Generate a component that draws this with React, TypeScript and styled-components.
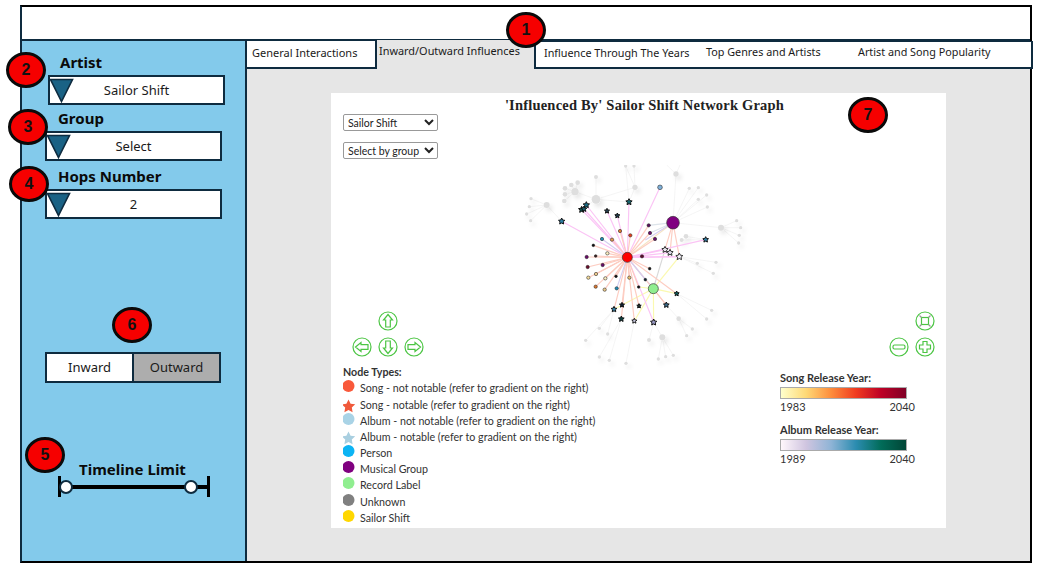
import React from "react";
import styled, { createGlobalStyle } from "styled-components";

const GlobalStyle = createGlobalStyle`
  html, body {
    margin: 0;
    padding: 0;
    background: #fff;
    font-family: "Noto Sans", "Liberation Sans", sans-serif;
  }
`;

const DARK = "#0e2b3f";

const Frame = styled.div`
  position: relative;
  box-sizing: border-box;
  width: 1012px;
  height: 558px;
  margin: 5px 0 0 20px;
  border: 2px solid #000;
  border-left-color: ${DARK};
  display: flex;
  flex-direction: column;
`;

const Header = styled.div`
  height: 32px;
  flex: none;
  background: #fff;
`;

const Main = styled.div`
  flex: 1;
  display: flex;
  min-height: 0;
  border-top: 2px solid ${DARK};
`;

const Sidebar = styled.div`
  box-sizing: border-box;
  width: 225px;
  flex: none;
  background: #83caeb;
  border-right: 2px solid ${DARK};
  padding-top: 11px;
  display: flex;
  flex-direction: column;
`;

const FieldLabel = styled.div<{ $left: number }>`
  margin-left: ${p => p.$left}px;
  font-size: 15px;
  line-height: 20px;
  font-weight: 700;
  color: #0a0a0a;
`;

const FieldBox = styled.div<{ $left: number; $gap: number }>`
  position: relative;
  box-sizing: border-box;
  width: 177px;
  height: 30px;
  margin: 3px 0 ${p => p.$gap}px ${p => p.$left}px;
  border: 2px solid ${DARK};
  background: #fff;
  font-size: 13px;
  line-height: 26px;
  text-align: center;
  color: #1a1a1a;
`;

const Caret = styled.svg`
  position: absolute;
  left: -1px;
  top: 1px;
  width: 25px;
  height: 25px;
`;

const Toggle = styled.div`
  box-sizing: border-box;
  display: flex;
  width: 176px;
  height: 31px;
  margin: 133px 0 0 23px;
  border: 2px solid ${DARK};
`;

const ToggleSide = styled.div<{ $off?: boolean }>`
  flex: 1;
  font-size: 13px;
  line-height: 27px;
  text-align: center;
  color: #1a1a1a;
  background: ${p => (p.$off ? "#adadad" : "#fff")};
  border-left: ${p => (p.$off ? `2px solid ${DARK}` : "none")};
`;

const TimelineTitle = styled.div`
  margin: 76px 0 0 22px;
  width: 177px;
  text-align: center;
  font-size: 15px;
  line-height: 20px;
  font-weight: 700;
  color: #0a0a0a;
`;

const Slider = styled.div`
  position: relative;
  box-sizing: border-box;
  width: 152px;
  height: 21px;
  margin: -3px 0 0 36px;
  border-left: 3px solid #000;
  border-right: 3px solid #000;
  display: flex;
  align-items: center;
`;

const SliderLine = styled.div`
  width: 100%;
  height: 4px;
  background: #000;
`;

const Knob = styled.div<{ $left: number }>`
  position: absolute;
  left: ${p => p.$left}px;
  top: 4px;
  box-sizing: border-box;
  width: 14px;
  height: 14px;
  border-radius: 50%;
  border: 2px solid ${DARK};
  background: #fff;
`;

const Content = styled.div`
  flex: 1;
  min-width: 0;
  background: #e6e6e6;
  display: flex;
  flex-direction: column;
`;

const TabRow = styled.div`
  display: flex;
  height: 28px;
  margin-right: -3px;
  flex: none;
`;

const Tab = styled.div<{ $width: number; $active?: boolean; $pad: number }>`
  box-sizing: border-box;
  width: ${p => p.$width}px;
  padding: ${p => (p.$active ? "3px" : "4px")} 0 0 ${p => p.$pad}px;
  font-size: ${p => (p.$active ? "10.9px" : "11px")};
  line-height: 16px;
  color: #1a1a1a;
  white-space: nowrap;
  background: ${p => (p.$active ? "#e6e6e6" : "#fff")};
  border-bottom: ${p => (p.$active ? "none" : `2px solid ${DARK}`)};
  border-right: ${p => (p.$active ? "none" : `2px solid ${DARK}`)};
  margin-top: ${p => (p.$active ? "-1px" : "0")};
`;

const TabRest = styled.div`
  flex: 1;
  display: flex;
  background: #fff;
  border: 2px solid ${DARK};
  border-top-width: 1px;
  font-size: 10.8px;
  line-height: 16px;
  color: #1a1a1a;
  padding: 3px 0 0 8px;
  white-space: nowrap;
`;

const TabRestItem = styled.span<{ $width: number; $up?: boolean }>`
  width: ${p => p.$width}px;
  margin-top: ${p => (p.$up ? "-1px" : "0")};
`;

const Plot = styled.div`
  position: relative;
  box-sizing: border-box;
  width: 615px;
  height: 435px;
  margin: 24px 0 0 84px;
  padding: 3px 12px 0;
  background: #fff;
  font-family: Lato, "Noto Sans", sans-serif;
  display: flex;
  flex-direction: column;
`;

const PlotTitle = styled.div`
  text-align: center;
  font-family: "Liberation Serif", serif;
  font-weight: 700;
  font-size: 14.5px;
  letter-spacing: 0.2px;
  line-height: 18px;
  color: #222;
  padding-left: 12px;
`;

const PlotSelect = styled.select`
  display: block;
  width: 95px;
  height: 17px;
  margin-bottom: 11px;
  padding: 0;
  font-family: Lato, sans-serif;
  font-size: 10.5px;
  background: #fff;
  color: #222;
  border: 1px solid #999;
  border-radius: 2px;
`;

const Selects = styled.div`
  position: relative;
  z-index: 1;
`;

const GraphSvg = styled.svg`
  position: absolute;
  left: 179px;
  top: 72px;
  width: 250px;
  height: 205px;
  filter: blur(0.5px);
`;

const NavLeft = styled.div`
  position: absolute;
  left: 21px;
  top: 218px;
  display: grid;
  grid-template-columns: repeat(3, 20px);
  gap: 6px;
`;

const NavRight = styled.div`
  position: absolute;
  left: 558px;
  top: 218px;
  display: grid;
  grid-template-columns: repeat(2, 20px);
  gap: 6px;
`;

const NavIcon = styled.svg<{ $col: number; $row: number }>`
  width: 20px;
  height: 20px;
  grid-column: ${p => p.$col};
  grid-row: ${p => p.$row};
`;

const Bottom = styled.div`
  margin-top: auto;
  display: flex;
  justify-content: space-between;
  align-items: flex-start;
  padding-bottom: 2px;
`;

const Legend = styled.div`
  font-size: 10.7px;
  color: #333;
`;

const LegendTitle = styled.div`
  font-weight: 700;
  line-height: 16px;
`;

const LegendRow = styled.div`
  display: flex;
  align-items: flex-start;
  height: 16.2px;
  line-height: 16px;
`;

const LegendMark = styled.svg`
  width: 17px;
  height: 16px;
  flex: none;
`;

const Scale = styled.div`
  width: 135px;
  margin: 0 19px 0 0;
  padding-top: 7px;
  font-size: 11px;
  color: #333;
`;

const ScaleTitle = styled.div`
  font-weight: 700;
  line-height: 14px;
  font-size: 11px;
`;

const ScaleBar = styled.div<{ $colors: string }>`
  box-sizing: border-box;
  width: 127px;
  height: 12px;
  margin-top: 2px;
  border: 1px solid #aaa;
  background: linear-gradient(to right, ${p => p.$colors});
`;

const ScaleEnds = styled.div`
  display: flex;
  justify-content: space-between;
  line-height: 15px;
  margin-bottom: 9px;
`;

const Badge = styled.div<{ $x: number; $y: number }>`
  position: absolute;
  left: ${p => p.$x - 20 - 22}px;
  top: ${p => p.$y - 18 - 7}px;
  box-sizing: border-box;
  width: 40px;
  height: 36px;
  border-radius: 50%;
  border: 3px solid #0a0a0a;
  background: #f60000;
  font-family: "Liberation Sans", sans-serif;
  font-size: 16px;
  font-weight: 700;
  line-height: 30px;
  text-align: center;
  color: #111;
  z-index: 2;
`;

// graph drawn from the reference, units are 1/3 px
const starPoints = (x: number, y: number, r: number) => {
  const pts: string[] = [];
  for (let i = 0; i < 10; i++) {
    const a = (Math.PI / 5) * i - Math.PI / 2;
    const rad = i % 2 ? r * 0.5 : r;
    pts.push(`${(x + rad * Math.cos(a)).toFixed(1)},${(y + rad * Math.sin(a)).toFixed(1)}`);
  }
  return pts.join(" ");
};

const CENTER = [352, 277];
const PURPLE = [489, 173];
const GREEN = [430, 371];

const PINK = "#fbc4f5";
const SALMON = "#fdcdc2";
const LAV = "#d5cef0";
const YEL = "#fbf9b0";

const faded: number[][] = [
  [258, 103, 13], [195, 80, 11], [110, 120, 9], [165, 70, 7], [184, 60, 7], [203, 53, 7], [165, 88, 7],
  [163, 108, 7], [258, 36, 6], [63, 101, 5], [58, 125, 5], [50, 147, 5], [62, 167, 5], [375, 67, 8],
  [347, 3, 5], [372, 3, 5], [498, 27, 8], [538, 70, 5], [565, 68, 5], [590, 90, 5], [565, 103, 5],
  [592, 126, 5], [633, 188, 9], [680, 167, 5], [692, 188, 5], [688, 211, 5], [686, 234, 5], [528, 214, 7],
  [515, 225, 6], [562, 295, 5], [618, 292, 5], [610, 325, 5], [605, 436, 5], [590, 462, 5], [506, 461, 7],
  [547, 492, 5], [530, 512, 5], [457, 517, 9], [417, 525, 6], [490, 571, 5], [467, 575, 5], [445, 582, 5],
  [268, 490, 5], [293, 507, 5], [227, 526, 5], [268, 576, 5], [298, 586, 5], [348, 595, 5],
];

const fadedEdges: number[][] = [
  [258, 103, 195, 80], [258, 103, 215, 134], [258, 103, 357, 111], [258, 103, 258, 36], [195, 80, 165, 70],
  [195, 80, 184, 60], [195, 80, 203, 53], [195, 80, 165, 88], [195, 80, 163, 108], [110, 120, 155, 169],
  [110, 120, 63, 101], [110, 120, 58, 125], [110, 120, 50, 147], [110, 120, 62, 167], [375, 67, 357, 111],
  [375, 67, 347, 3], [375, 67, 372, 3], [375, 67, 258, 103], [489, 173, 498, 27], [489, 173, 538, 70],
  [489, 173, 565, 68], [489, 173, 590, 90], [489, 173, 565, 103], [489, 173, 592, 126], [489, 173, 633, 188],
  [633, 188, 680, 167], [633, 188, 692, 188], [633, 188, 688, 211], [633, 188, 686, 234], [587, 224, 528, 214],
  [587, 224, 515, 225], [508, 275, 562, 295], [508, 275, 618, 292], [508, 275, 610, 325], [500, 386, 605, 436],
  [500, 386, 590, 462], [469, 420, 506, 461], [506, 461, 547, 492], [506, 461, 530, 512], [431, 472, 457, 517],
  [431, 472, 417, 525], [457, 517, 490, 571], [457, 517, 467, 575], [457, 517, 445, 582], [312, 433, 268, 490],
  [312, 433, 293, 507], [312, 433, 227, 526], [334, 462, 268, 576], [334, 462, 298, 586], [373, 468, 348, 595],
  [498, 27, 470, 0], [498, 27, 510, 0], [357, 111, 347, 3],
];

const stars: [number, number, number, string, string][] = [
  [155, 169, 10, "#2f7fa6", PINK], [215, 134, 10, "#0c4f4f", PINK], [222, 132, 9, "#1b5a6a", PINK],
  [229, 120, 10, "#1a6c86", PINK], [291, 138, 8, "#26404f", PINK], [322, 152, 8, "#1f3b4a", PINK],
  [357, 111, 10, "#15656e", PINK], [587, 224, 9, "#2f7fa6", PINK], [465, 254, 10, "#e8e6ef", PINK],
  [480, 263, 10, "#dcd8e8", PINK], [508, 275, 11, "#f1eef6", PINK], [500, 386, 8, "#0d5a5a", SALMON],
  [469, 420, 9, "#3a6a8a", SALMON], [431, 472, 10, "#9a9ac4", PINK], [373, 468, 8, "#c8c8de", SALMON],
  [334, 462, 9, "#0c4040", SALMON], [387, 423, 7, "#223333", SALMON], [312, 433, 9, "#2f7fa6", SALMON],
  [336, 420, 8, "#112233", SALMON],
];

const dots: [number, number, number, string, string][] = [
  [450, 67, 7, "#7fb0d8", PINK], [276, 222, 5, "#1f8ab4", LAV], [306, 224, 5, "#e39a4d", SALMON],
  [330, 198, 5, "#d9772f", SALMON], [361, 211, 5, "#e3401f", SALMON], [416, 181, 5, "#5b0f5b", SALMON],
  [420, 204, 5, "#6a0a6a", SALMON], [435, 222, 5, "#6a0a6a", SALMON], [396, 274, 5, "#5e0c2c", PINK],
  [250, 241, 4, "#111", SALMON], [292, 265, 5, "#fbeec0", SALMON], [257, 273, 4, "#3a2020", SALMON],
  [230, 276, 5, "#6a0a6a", SALMON], [233, 306, 5, "#6a0c2c", SALMON], [278, 300, 5, "#6a0a6a", SALMON],
  [258, 327, 5, "#eac88a", SALMON], [235, 338, 5, "#f5dc9c", SALMON], [286, 340, 5, "#fbeec0", SALMON],
  [318, 334, 4, "#111", SALMON], [358, 338, 5, "#e8c070", SALMON], [406, 344, 4, "#123", LAV],
  [419, 311, 4, "#111", SALMON], [257, 365, 5, "#d9772f", SALMON], [284, 374, 5, "#eac88a", SALMON],
  [320, 370, 5, "#1f8ab4", LAV], [386, 366, 4, "#111", SALMON],
];

const sideEdges: [number[], number[], string][] = [
  [PURPLE, [352, 277], "#f6e4c4"], [PURPLE, [465, 254], SALMON], [PURPLE, [480, 263], SALMON],
  [PURPLE, [508, 275], SALMON], [PURPLE, [406, 225], LAV], [PURPLE, [416, 181], "#dde4ea"], [PURPLE, [420, 204], "#dde4ea"],
  [GREEN, [465, 254], "#d8d8d8"], [GREEN, [508, 275], YEL], [GREEN, [312, 433], YEL], [GREEN, [373, 468], YEL],
  [GREEN, [386, 366], YEL], [GREEN, [500, 386], YEL], [GREEN, [431, 472], YEL], [GREEN, [469, 420], SALMON],
  [[352, 277], [508, 275], PINK], [[352, 277], GREEN, LAV],
];

const isLight = (c: string) => /^#[def]/.test(c);

const NetworkGraph = () => (
  <GraphSvg viewBox="0 0 750 615">
    <defs>
      <filter id="soft" x="-30%" y="-30%" width="160%" height="160%">
        <feDropShadow dx="8" dy="10" stdDeviation="7" floodColor="#000" floodOpacity="0.1" />
      </filter>
    </defs>
    <g stroke="#f0f0f0" strokeWidth="2">
      {fadedEdges.map((e, i) => (
        <line key={i} x1={e[0]} y1={e[1]} x2={e[2]} y2={e[3]} />
      ))}
    </g>
    <g fill="#dedede" filter="url(#soft)">
      {faded.map((n, i) => (
        <circle key={i} cx={n[0]} cy={n[1]} r={n[2]} />
      ))}
    </g>
    <g strokeWidth="3.5">
      {sideEdges.map((e, i) => (
        <line key={i} x1={e[0][0]} y1={e[0][1]} x2={e[1][0]} y2={e[1][1]} stroke={e[2]} />
      ))}
      {[...stars, ...dots].map((n, i) => (
        <line key={i} x1={CENTER[0]} y1={CENTER[1]} x2={n[0]} y2={n[1]} stroke={n[4]} />
      ))}
    </g>
    <g stroke="#222" strokeWidth="1.6">
      {dots.map((n, i) => (
        <circle key={i} cx={n[0]} cy={n[1]} r={n[2]} fill={n[3]} />
      ))}
      {stars.map((n, i) => (
        <polygon key={i} points={starPoints(n[0], n[1], n[2])} fill={n[3]} stroke={isLight(n[3]) ? "#333" : "#111"} strokeWidth="3" />
      ))}
    </g>
    <g stroke="#333" strokeWidth="2">
      <circle cx={PURPLE[0]} cy={PURPLE[1]} r="19" fill="#800080" />
      <circle cx={GREEN[0]} cy={GREEN[1]} r="15" fill="#90ee90" />
      <circle cx={CENTER[0]} cy={CENTER[1]} r="15" fill="#ff0000" />
    </g>
  </GraphSvg>
);

const ARROW_UP = "M10 3.5 L14.5 9 L12.3 9 L12.3 16 L7.7 16 L7.7 9 L5.5 9 Z";
const glyphs: Record<string, React.ReactNode> = {
  up: <path d={ARROW_UP} />,
  down: <path d={ARROW_UP} transform="rotate(180 10 10)" />,
  left: <path d={ARROW_UP} transform="rotate(-90 10 10)" />,
  right: <path d={ARROW_UP} transform="rotate(90 10 10)" />,
  minus: <rect x="4" y="8" width="12" height="4" rx="1.5" />,
  plus: <path d="M8 4.5 H12 V8 H15.5 V12 H12 V15.5 H8 V12 H4.5 V8 H8 Z" />,
  fit: (
    <>
      <rect x="6.5" y="6.5" width="7" height="7" />
      <path d="M4.5 4.5 L6.5 6.5 M15.5 4.5 L13.5 6.5 M4.5 15.5 L6.5 13.5 M15.5 15.5 L13.5 13.5" stroke="#999" />
    </>
  ),
};

const Nav = ({ name, col, row }: { name: string; col: number; row: number }) => (
  <NavIcon $col={col} $row={row} viewBox="0 0 20 20" fill="none" stroke="#4cc544" strokeWidth="1.2">
    <circle cx="10" cy="10" r="9" />
    {glyphs[name]}
  </NavIcon>
);

const legendItems: [string, string, boolean][] = [
  ["Song - not notable (refer to gradient on the right)", "#f9593b", false],
  ["Song - notable (refer to gradient on the right)", "#f0593b", true],
  ["Album - not notable (refer to gradient on the right)", "#a9d3e6", false],
  ["Album - notable (refer to gradient on the right)", "#a9cfe0", true],
  ["Person", "#0cb4f4", false],
  ["Musical Group", "#800080", false],
  ["Record Label", "#90ee90", false],
  ["Unknown", "#808080", false],
  ["Sailor Shift", "#ffd700", false],
];

const Field = ({ label, value, labelLeft, left, gap }: { label: string; value: string; labelLeft: number; left: number; gap: number }) => (
  <>
    <FieldLabel $left={labelLeft}>{label}</FieldLabel>
    <FieldBox $left={left} $gap={gap}>
      <Caret viewBox="0 0 25 25">
        <path d="M1.5 1.5 H23.5 L12.5 23.5 Z" fill="#1a6285" stroke={DARK} strokeWidth="1.6" />
      </Caret>
      {value}
    </FieldBox>
  </>
);

export default function App() {
  return (
    <>
      <GlobalStyle />
      <Frame>
        <Header />
        <Main>
          <Sidebar>
            <Field label="Artist" value="Sailor Shift" labelLeft={38} left={26} gap={3} />
            <Field label="Group" value="Select" labelLeft={36} left={23} gap={5} />
            <Field label="Hops Number" value="2" labelLeft={36} left={23} gap={0} />
            <Toggle>
              <ToggleSide>Inward</ToggleSide>
              <ToggleSide $off>Outward</ToggleSide>
            </Toggle>
            <TimelineTitle>Timeline Limit</TimelineTitle>
            <Slider>
              <SliderLine />
              <Knob $left={-2} />
              <Knob $left={123} />
            </Slider>
          </Sidebar>
          <Content>
            <TabRow>
              <Tab $width={130} $pad={5}>General Interactions</Tab>
              <Tab $width={157} $pad={2} $active>Inward/Outward Influences</Tab>
              <TabRest>
                <TabRestItem $width={162}>Influence Through The Years</TabRestItem>
                <TabRestItem $width={152} $up>Top Genres and Artists</TabRestItem>
                <TabRestItem $width={140} $up>Artist and Song Popularity</TabRestItem>
              </TabRest>
            </TabRow>
            <Plot>
              <PlotTitle>'Influenced By' Sailor Shift Network Graph</PlotTitle>
              <NetworkGraph />
              <Selects>
                <PlotSelect defaultValue="Sailor Shift">
                  <option>Sailor Shift</option>
                </PlotSelect>
                <PlotSelect defaultValue="Select by group">
                  <option>Select by group</option>
                </PlotSelect>
              </Selects>
              <NavLeft>
                <Nav name="up" col={2} row={1} />
                <Nav name="left" col={1} row={2} />
                <Nav name="down" col={2} row={2} />
                <Nav name="right" col={3} row={2} />
              </NavLeft>
              <NavRight>
                <Nav name="fit" col={2} row={1} />
                <Nav name="minus" col={1} row={2} />
                <Nav name="plus" col={2} row={2} />
              </NavRight>
              <Bottom>
                <Legend>
                  <LegendTitle>Node Types:</LegendTitle>
                  {legendItems.map(([text, color, isStar]) => (
                    <LegendRow key={text}>
                      <LegendMark viewBox="0 0 17 16">
                        {isStar ? (
                          <polygon points={starPoints(5.5, 9.5, 7)} fill={color} />
                        ) : (
                          <circle cx="5.5" cy="6" r="6" fill={color} />
                        )}
                      </LegendMark>
                      {text}
                    </LegendRow>
                  ))}
                </Legend>
                <Scale>
                  <ScaleTitle>Song Release Year:</ScaleTitle>
                  <ScaleBar $colors="#ffffcc, #fed976, #fd8d3c, #f03b20, #bd0026, #800026" />
                  <ScaleEnds><span>1983</span><span>2040</span></ScaleEnds>
                  <ScaleTitle>Album Release Year:</ScaleTitle>
                  <ScaleBar $colors="#fff7fb, #d0c5e0, #8fb4d6, #2b8cb0, #016c59, #014636" />
                  <ScaleEnds><span>1989</span><span>2040</span></ScaleEnds>
                </Scale>
              </Bottom>
            </Plot>
          </Content>
        </Main>
        <Badge $x={526} $y={30}>1</Badge>
        <Badge $x={26} $y={70}>2</Badge>
        <Badge $x={28} $y={127}>3</Badge>
        <Badge $x={29} $y={184}>4</Badge>
        <Badge $x={45} $y={455}>5</Badge>
        <Badge $x={132} $y={325}>6</Badge>
        <Badge $x={868} $y={115}>7</Badge>
      </Frame>
    </>
  );
}
